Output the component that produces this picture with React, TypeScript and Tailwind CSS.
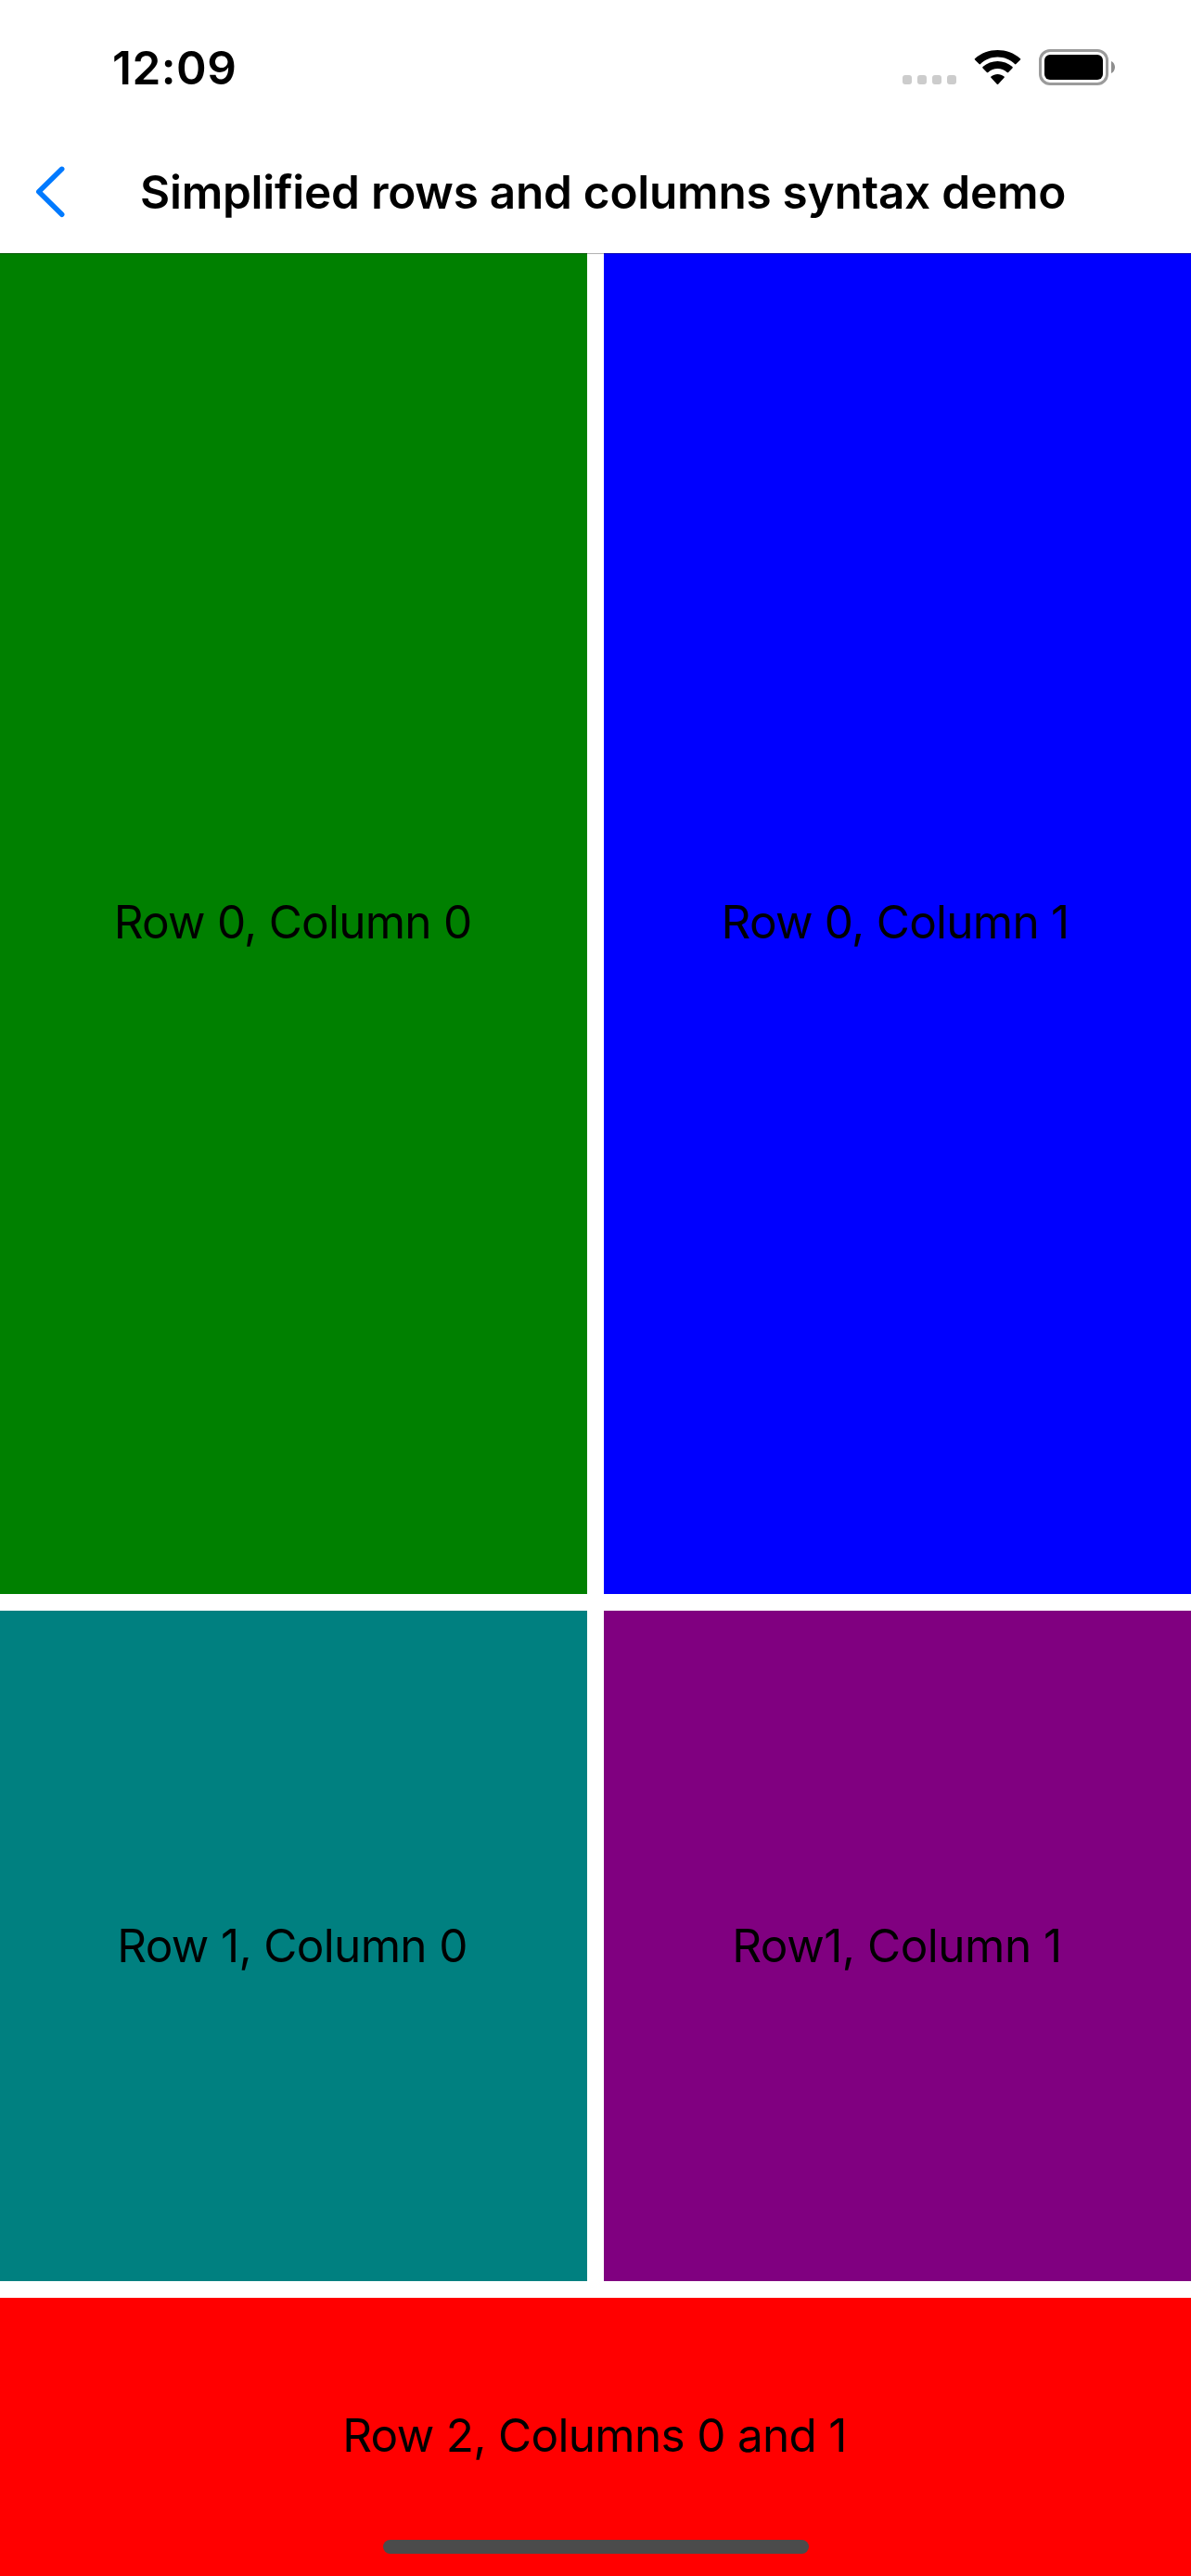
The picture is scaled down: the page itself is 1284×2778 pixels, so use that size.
type Cell = { label: string; className: string };

const cells: Cell[] = [
  { label: 'Row 0, Column 0', className: 'bg-[#008000] pb-1 pr-[2px] tracking-[-0.78px]' },
  { label: 'Row 0, Column 1', className: 'bg-[#0000ff] pb-1 pr-[5px] tracking-[-0.76px]' },
  { label: 'Row 1, Column 0', className: 'bg-[#008080] pb-[1px] pr-[3px] tracking-[-0.67px]' },
  { label: 'Row1, Column 1', className: 'bg-[#800080] pb-[1px] pr-[1px] tracking-[-0.5px]' },
  { label: 'Row 2, Columns 0 and 1', className: 'col-span-2 bg-[#ff0000] pb-1 pr-[2px] tracking-[-0.7px]' },
];

function SignalDots() {
  return (
    <div className="mt-[28px] flex gap-[6px]">
      {[0, 1, 2, 3].map((i) => (
        <span key={i} className="size-[10px] rounded-[3px] bg-[#cccccc]" />
      ))}
    </div>
  );
}

function WifiIcon() {
  return (
    <svg className="ml-[19px] mt-[1px] h-[38px] w-[51px]" viewBox="0 0 51 38" fill="#000">
      <path d="M25.5 7.6C32.4 7.6 39 10.300 44 15.100C44.400 15.500 45 15.500 45.400 15.100L50 10.500C50.400 10.100 50.400 9.600 50 9.200C36.300 -3 14.700 -3 1 9.200C.6 9.600 .6 10.100 1 10.500L5.600 15.100C6 15.500 6.600 15.500 7 15.100C12 10.300 18.600 7.600 25.500 7.600Z" />
      <path d="M25.500 20C29.300 20 32.900 21.400 35.700 23.900C36.100 24.300 36.700 24.300 37.100 23.900L41.500 19.500C41.900 19.100 41.900 18.500 41.500 18.100C32.500 9.800 18.500 9.800 9.500 18.100C9.100 18.500 9.100 19.100 9.500 19.500L13.900 23.900C14.300 24.300 14.900 24.300 15.300 23.900C18.100 21.400 21.700 20 25.500 20Z" />
      <path d="M32.600 28.500C33 28.900 33 29.400 32.600 29.800L26.200 36.800C25.800 37.200 25.200 37.200 24.800 36.800L18.400 29.800C18 29.400 18 28.900 18.400 28.500C22.500 25.100 28.500 25.100 32.600 28.500Z" />
    </svg>
  );
}

function BatteryIcon() {
  return (
    <div className="ml-[19px] flex items-center">
      <div className="h-[39px] w-[75px] rounded-[12px] border-3 border-[#9b9b9b] p-[3px]">
        <div className="h-full w-full rounded-[6px] bg-black" />
      </div>
      <svg className="ml-[3px] h-[13px] w-[4px]" viewBox="0 0 4 13">
        <path d="M0 0C2.400 1 4 3.600 4 6.500S2.400 12 0 13Z" fill="#8e8e8e" />
      </svg>
    </div>
  );
}

export default function App() {
  return (
    <div className="relative flex h-[2778px] w-[1284px] flex-col bg-white font-[Inter,sans-serif] text-[49.5px] leading-[60px] text-black">
      <div className="flex h-[146px] items-center justify-between pb-px pl-[121px] pr-[82px]">
        <span className="font-semibold tracking-[0.5px]">12:09</span>
        <div className="flex h-[39px] items-start">
          <SignalDots />
          <WifiIcon />
          <BatteryIcon />
        </div>
      </div>
      <header className="flex h-[127px] items-center pb-[5px] pl-[37px]">
        <svg className="h-[58px] w-[34px]" viewBox="0 0 34 58" fill="none">
          <path d="M29.700 4.300L4.800 28.800L29.700 53.300" stroke="#007aff" strokeWidth="5.500" strokeLinecap="round" strokeLinejoin="round" />
        </svg>
        <h1 className="ml-[80px] whitespace-nowrap font-semibold tracking-[-0.25px]">
          Simplified rows and columns syntax demo
        </h1>
      </header>
      <main className="relative grid flex-1 grid-cols-2 grid-rows-[1446px_723px_300px] gap-[18px]">
        {cells.map((cell) => (
          <div key={cell.label} className={`flex items-center justify-center whitespace-nowrap ${cell.className}`}>
            {cell.label}
          </div>
        ))}
        <div className="absolute inset-x-0 top-0 h-px bg-black/30" />
      </main>
      <div className="absolute bottom-[24px] left-[413px] h-[15px] w-[459px] rounded-[8px] bg-[#4b4b4b]" />
    </div>
  );
}
